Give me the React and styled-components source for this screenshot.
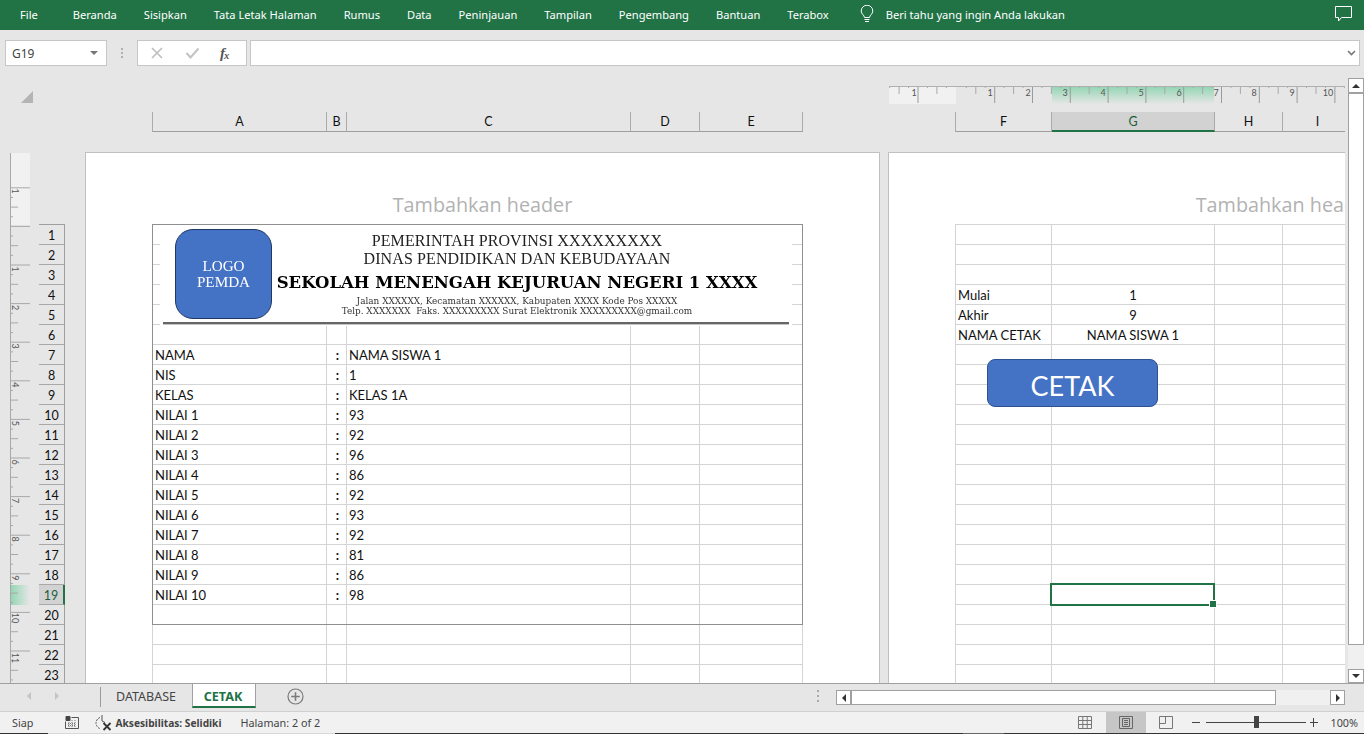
import React from "react";
import styled, { createGlobalStyle } from "styled-components";

const UI = `"Noto Sans", "Open Sans", sans-serif`;
const CELL = `Lato, "Open Sans", sans-serif`;
const GREEN = "#217346";

const Global = createGlobalStyle`
  html, body { margin: 0; padding: 0; background: #e6e6e6; }
  * { box-sizing: border-box; }
`;

const Shell = styled.div`
  width: 1364px; height: 734px; overflow: hidden;
  display: flex; flex-direction: column;
  background: #e6e6e6; font-family: ${UI};
`;

/* ---------- ribbon ---------- */
const Ribbon = styled.div`
  height: 30px; flex: none; background: ${GREEN}; color: #fff;
  display: flex; align-items: center; padding: 0 0 2px 20px;
  font-size: 11.12px;
`;
const RibbonTab = styled.span`
  margin-right: ${(p) => p.$gap}px; white-space: nowrap;
`;
const TellMe = styled.div`
  display: flex; align-items: center; gap: 12px; margin-left: 4px; white-space: nowrap;
`;
const CommentButton = styled.div`
  margin-left: auto; margin-right: 12px; display: flex;
`;

/* ---------- formula bar ---------- */
const FormulaBar = styled.div`
  height: 40px; flex: none; display: flex; padding: 10px 4px 4px 5px;
`;
const NameBox = styled.div`
  width: 102px; background: #fff; border: 1px solid #c6c6c6;
  display: flex; align-items: center; justify-content: space-between;
  padding: 0 8px 0 6px; font-size: 12px; color: #444;
`;
const Caret = styled.span`
  width: 0; height: 0; border-left: 4px solid transparent; border-right: 4px solid transparent;
  border-top: 4px solid #777;
`;
const Grip = styled.div`
  width: 30px; display: flex; flex-direction: column; align-items: center; justify-content: center; gap: 2px;
  i { width: 2px; height: 2px; background: ${(p) => p.$tone || "#b0b0b0"}; display: block; }
`;
const FxBox = styled.div`
  width: 110px; background: #fff; border: 1px solid #c6c6c6;
  display: flex; align-items: center; padding-left: 12px; gap: 21px;
`;
const FxLabel = styled.span`
  font-family: "Liberation Serif", serif; font-style: italic; font-weight: 700;
  font-size: 15px; color: #555; margin-left: -1px;
  sub { font-size: 10.5px; vertical-align: -1px; margin-left: -1px; }
`;
const FormulaInput = styled.div`
  flex: 1; margin-left: 3px; background: #fff; border: 1px solid #c6c6c6;
  display: flex; align-items: center; justify-content: flex-end; padding-right: 3px;
`;

/* ---------- workspace ---------- */
const Workspace = styled.div`
  flex: 1; min-height: 0; display: flex;
`;
const SheetArea = styled.div`
  width: 1345px; flex: none; overflow: hidden; display: flex; flex-direction: column;
`;
const RulerBand = styled.div`
  height: 18px; margin-top: 16px; flex: none; display: flex;
`;
const CornerMark = styled.div`
  width: 12px; height: 12px; margin: 5px 0 0 21px; background: #b4b4b4;
  clip-path: polygon(100% 0, 100% 100%, 0 100%);
`;
const TopRuler = styled.svg`
  margin-left: auto; display: block; flex: none;
`;
const ColumnBand = styled.div`
  height: 20px; margin-top: 8px; flex: none; display: flex; padding-left: 152px;
`;
const ColumnGroup = styled.div`
  display: flex; flex: none; margin-right: ${(p) => p.$after || 0}px;
`;
const ColumnHead = styled.div`
  flex: none; width: ${(p) => p.$w}px; height: 20px;
  font-family: ${CELL}; font-size: 12.5px; line-height: 19px; text-align: center;
  color: ${(p) => (p.$active ? "#1d5f3b" : "#111")};
  background: ${(p) => (p.$active ? "#d2d2d2" : "transparent")};
  border-bottom: ${(p) => (p.$active ? `2px solid ${GREEN}` : "1px solid #9e9e9e")};
  border-right: 1px solid #ababab;
  border-left: ${(p) => (p.$first ? "1px solid #ababab" : "0")};
`;
const Body = styled.div`
  flex: 1; min-height: 0; margin-top: 20px; display: flex; overflow: hidden;
`;
const SideRuler = styled.svg`
  display: block; flex: none; margin: 1px 0 0 10px;
`;
const RowHeads = styled.div`
  flex: none; width: 26px; margin: 72px 0 0 9px; border-top: 1px solid #9e9e9e; align-self: flex-start;
`;
const RowHead = styled.div`
  height: 20px; text-align: center; font-family: ${CELL}; font-size: 12.5px; line-height: 21px;
  color: ${(p) => (p.$active ? "#1d5f3b" : "#111")};
  background: ${(p) => (p.$active ? "#d2d2d2" : "transparent")};
  border-bottom: 1px solid #a8a8a8;
  border-right: ${(p) => (p.$active ? `2px solid ${GREEN}` : "1px solid #9e9e9e")};
`;
const Page = styled.section`
  flex: none; width: 795px; height: 600px; margin-left: ${(p) => p.$left}px;
  background: #fff; border: 1px solid #c0c0c0;
  padding-left: 66px;
`;
const HeaderHint = styled.div`
  height: 71px; margin-left: -66px; padding-top: 38px; text-align: center;
  font-size: 19.8px; line-height: 28px; color: #b2b2b2; font-family: "Open Sans", sans-serif;
  white-space: nowrap;
`;
const Sheet = styled.div`
  position: relative; display: grid; width: max-content;
  grid-template-columns: ${(p) => p.$cols};
  grid-auto-rows: 20px;
  border-top: 1px solid #d4d4d4; border-left: 1px solid #d4d4d4;
`;
const Cell = styled.div`
  position: relative; height: 20px; padding: 0 2px;
  border-right: 1px solid #d4d4d4; border-bottom: 1px solid #d4d4d4;
  font-family: ${CELL}; font-size: 13px; line-height: 20px; color: #111; white-space: nowrap;
  text-align: ${(p) => p.$align || "left"};
  font-weight: ${(p) => (p.$bold ? 700 : 400)};
  padding-left: ${(p) => (p.$bold ? 4 : 2)}px;
`;
const PrintArea = styled.div`
  position: absolute; left: -1px; top: -1px; width: 651px; height: 401px;
  border: 1px solid #8f8f8f; pointer-events: none;
`;
const Letterhead = styled.div`
  position: absolute; left: 7px; top: 0; width: 632px; height: 101px;
  background: #fff; display: flex; flex-direction: column; filter: blur(0.25px);
`;
const LetterTop = styled.div`
  display: flex; flex: none; height: 97px;
`;
const Logo = styled.div`
  flex: none; width: 97px; height: 90px; margin: 4px 0 0 15px;
  background: #4472c4; border: 1px solid #1f3864; border-radius: 18px;
  color: #fff; font-family: "Liberation Serif", serif; font-size: 15.2px; line-height: 16px;
  display: flex; flex-direction: column; align-items: center; justify-content: center;
`;
const LetterText = styled.div`
  flex: none; width: 490px; text-align: center; color: #222; white-space: nowrap;
  font-family: "Liberation Serif", serif; padding-top: 7px;
`;
const LetterLine = styled.div`
  font-size: 16px; line-height: 18px; letter-spacing: 0.1px;
`;
const SchoolName = styled.div`
  font-family: "DejaVu Serif", serif; font-weight: 700; color: #000;
  font-size: 16.5px; line-height: 20px; margin-top: 5px;
`;
const Address = styled.div`
  font-family: "DejaVu Serif", serif; font-size: 8.9px; line-height: 10px; color: #333;
`;
const AddressBlock = styled.div`
  margin-top: 3px;
`;
const LetterRule = styled.div`
  height: 2px; margin: 0 3px; background: #666;
  box-shadow: 0 1px 0 #c4c4c4;
`;
const SelectionBox = styled.div`
  position: absolute; left: -2px; top: -2px; width: 165px; height: 23px;
  border: 2px solid ${GREEN}; z-index: 2;
`;
const FillHandle = styled.div`
  position: absolute; right: -3px; bottom: -3px; width: 6px; height: 6px;
  background: ${GREEN}; outline: 1px solid #fff;
`;
const PrintButton = styled.div`
  position: absolute; left: 31px; top: 134px; width: 171px; height: 48px;
  background: #4472c4; border: 1px solid #2f528f; border-radius: 8px; z-index: 1;
  color: #fff; font-family: ${CELL}; font-size: 27px; line-height: 52px; text-align: center;
`;

/* ---------- vertical scrollbar ---------- */
const VScroll = styled.div`
  width: 16px; margin: 8px 0 0 3px; flex: none; display: flex; flex-direction: column; background: #f0f0f0;
`;
const ScrollButton = styled.div`
  flex: none; width: ${(p) => p.$w || 16}px; height: ${(p) => p.$h || 15}px;
  background: #fff; border: 1px solid #a0a0a0;
  display: flex; align-items: center; justify-content: center;
`;
const Thumb = styled.div`
  flex: ${(p) => p.$flex}; background: #fff; border: 1px solid #a0a0a0;
`;
const ScrollGap = styled.div`
  flex: none; height: 24px;
`;
const Arrow = styled.span`
  width: 0; height: 0; display: block;
  ${(p) => p.$dir === "up" && "border-left: 4px solid transparent; border-right: 4px solid transparent; border-bottom: 4px solid #333;"}
  ${(p) => p.$dir === "down" && "border-left: 4px solid transparent; border-right: 4px solid transparent; border-top: 4px solid #333;"}
  ${(p) => p.$dir === "left" && `border-top: 4px solid transparent; border-bottom: 4px solid transparent; border-right: 4px solid ${p.$c || "#333"};`}
  ${(p) => p.$dir === "right" && `border-top: 4px solid transparent; border-bottom: 4px solid transparent; border-left: 4px solid ${p.$c || "#333"};`}
`;

/* ---------- tab bar ---------- */
const TabBar = styled.div`
  height: 28px; flex: none; border-top: 1px solid #a0a0a0; display: flex; align-items: flex-start;
`;
const TabNav = styled.div`
  width: 100px; height: 24px; flex: none; display: flex; align-items: center; padding-left: 27px; gap: 24px;
`;
const TabDivider = styled.div`
  width: 1px; height: 20px; margin-top: 3px; background: #9a9a9a; flex: none;
`;
const SheetTab = styled.div`
  height: 24px; flex: none; width: ${(p) => p.$w}px; text-align: center; line-height: 25px;
  font-size: ${(p) => (p.$active ? 12.6 : 12.5)}px;
  color: ${(p) => (p.$active ? GREEN : "#444")};
  font-weight: ${(p) => (p.$active ? 700 : 400)};
  background: ${(p) => (p.$active ? "#fff" : "transparent")};
  border-left: ${(p) => (p.$active ? "1px solid #a0a0a0" : "0")};
  border-right: ${(p) => (p.$active ? "1px solid #a0a0a0" : "0")};
  border-bottom: ${(p) => (p.$active ? `2px solid ${GREEN}` : "0")};
  padding-right: ${(p) => (p.$active ? 2 : 1)}px;
`;
const AddTab = styled.div`
  margin: 4px 0 0 31px; display: flex; flex: none;
`;
const TabGrip = styled(Grip)`
  width: 10px; height: 16px; margin: 4px 13px 0 auto; gap: 3px;
`;
const HScroll = styled.div`
  width: 509px; height: 15px; margin: 6px 19px 0 0; flex: none; display: flex; background: #f0f0f0;
`;
const HThumb = styled.div`
  width: 425px; flex: none; background: #fff; border: 1px solid #a0a0a0;
`;
const HGap = styled.div`
  flex: 1;
`;

/* ---------- status bar ---------- */
const StatusBar = styled.div`
  height: 22px; flex: none; background: #f1f1f1; border-top: 1px solid #d0d0d0;
  display: flex; align-items: stretch; color: #444;
`;
const StatusItem = styled.div`
  flex: none; display: flex; align-items: center; margin-left: ${(p) => p.$left}px;
  font-weight: ${(p) => (p.$bold ? 700 : 400)}; white-space: nowrap; color: ${(p) => p.$c || "#444"};
  font-size: ${(p) => p.$size || 10.8}px;
`;
const ViewButton = styled.div`
  flex: none; width: ${(p) => p.$w}px; display: flex; align-items: center; justify-content: center;
  background: ${(p) => (p.$active ? "#c6c6c6" : "transparent")};
`;
const ZoomTrack = styled.div`
  position: relative; width: 100px; margin: 10px 4px 0 6px; height: 1px; background: #444; flex: none;
`;
const ZoomThumb = styled.div`
  position: absolute; left: 48px; top: -6px; width: 5px; height: 12px; background: #444;
`;
const ZoomSign = styled.div`
  flex: none; width: 8px; height: 1px; background: #444; position: relative;
  &::after {
    content: ${(p) => (p.$plus ? '""' : "none")};
    position: absolute; left: 3.5px; top: -4px; width: 1px; height: 9px; background: #444;
  }
`;
const Sliver = styled.div`
  height: 1px; flex: none;
  background: linear-gradient(to right, #333 0 48px, #d8d8d8 48px 335px, #333 335px 963px, #666 963px 1004px, #333 1004px);
`;
const StatusRight = styled.div`
  margin-left: auto; display: flex; align-items: stretch;
`;

/* ---------- drawings ---------- */
const ticksTop = () => {
  const out = [];
  const run = (origin, from, to) => {
    for (let i = -40; i < 60; i++) {
      const x = origin + i * 9.45;
      if (x < from || x > to) continue;
      const k = ((i % 4) + 4) % 4;
      const h = k === 0 ? 17 : k === 2 ? 8 : 2;
      out.push(<line key={`t${origin}${i}`} x1={x} x2={x} y1={1} y2={h} stroke={k === 0 ? "#9a9a9a" : "#a8a8a8"} strokeWidth="1" />);
    }
  };
  run(105.7, 70, 456);
  run(29, 0, 66);
  return out;
};
const rulerNums = [[25, 1], [101, 1], [139, 2], [176, 3], [214, 4], [252, 5], [290, 6], [327, 7], [365, 8], [403, 9], [439, 10]];

const TopRulerArt = () => (
  <TopRuler width="456" height="18" viewBox="0 0 456 18">
    <defs>
      <linearGradient id="rg" x1="0" x2="0" y1="0" y2="1">
        <stop offset="0" stopColor="#94d6b4" />
        <stop offset="1" stopColor="#e6e6e6" />
      </linearGradient>
    </defs>
    <rect x="0" y="1" width="67" height="17" fill="#f1f1f1" />
    <rect x="163" y="1" width="162" height="17" fill="url(#rg)" />
    <line x1="0" x2="456" y1="0.5" y2="0.5" stroke="#b0b0b0" />
    {ticksTop()}
    {rulerNums.map(([x, n]) => (
      <text key={`${x}`} x={x} y="10" fontSize="9" fontFamily="Lato, sans-serif" fill="#555" textAnchor="middle">{n}</text>
    ))}
  </TopRuler>
);

const SideRulerArt = () => {
  const items = [];
  for (let i = -8; i < 50; i++) {
    const y = 112 + i * 9.65;
    if (y < 0 || y > 530) continue;
    const k = ((i % 4) + 4) % 4;
    const w = k === 0 ? 19 : k === 2 ? 7 : 2;
    items.push(<line key={i} x1="1" x2={1 + w} y1={y} y2={y} stroke="#a8a8a8" />);
  }
  const nums = [[38, 1], [116, 1], [154.6, 2], [193, 3], [231.8, 4], [270.4, 5], [309, 6], [347.6, 7], [386, 8], [424.8, 9], [465, 10], [505, 11]];
  return (
    <SideRuler width="20" height="530" viewBox="0 0 20 530">
      <defs>
        <linearGradient id="rs" x1="0" x2="1" y1="0" y2="0">
          <stop offset="0" stopColor="#94d6b4" />
          <stop offset="1" stopColor="#e6e6e6" />
        </linearGradient>
      </defs>
      <rect x="1" y="0" width="19" height="72" fill="#f1f1f1" />
      <rect x="1" y="432" width="19" height="20" fill="url(#rs)" />
      <line x1="0.5" x2="0.5" y1="0" y2="530" stroke="#a8a8a8" />
      {items}
      {nums.map(([y, n]) => (
        <text key={y} x="0" y="0" transform={`translate(2 ${y}) rotate(90)`} fontSize="9" fontFamily="Lato, sans-serif" fill="#555" textAnchor="middle">{n}</text>
      ))}
    </SideRuler>
  );
};

const Bulb = () => (
  <svg width="14" height="18" viewBox="0 0 14 18" fill="none" stroke="#fff" strokeWidth="1">
    <path d="M4.5 12.5 C4.2 10 1.2 9 1.2 6 A5.8 5.8 0 0 1 12.8 6 C12.8 9 9.8 10 9.5 12.5 Z" />
    <path d="M4.5 14.5 H9.5 M5 16.5 H9" />
  </svg>
);
const Comment = () => (
  <svg width="17" height="16" viewBox="0 0 17 16" fill="none" stroke="#fff" strokeWidth="1">
    <path d="M0.5 0.5 H16.5 V11.5 H6.5 L3.5 15 V11.5 H0.5 Z" />
  </svg>
);
const XMark = () => (
  <svg width="14" height="14" viewBox="0 0 14 14" fill="none" stroke="#bdbdbd" strokeWidth="1.6">
    <path d="M2 2 L12 12 M12 2 L2 12" />
  </svg>
);
const CheckMark = () => (
  <svg width="15" height="14" viewBox="0 0 15 14" fill="none" stroke="#c2c2c2" strokeWidth="2">
    <path d="M1.5 7 L5.5 11.5 L13.5 2.5" />
  </svg>
);
const Chevron = () => (
  <svg width="9" height="6" viewBox="0 0 9 6" fill="none" stroke="#777" strokeWidth="1.6">
    <path d="M1 1 L4.5 4.5 L8 1" />
  </svg>
);
const PlusCircle = () => (
  <svg width="17" height="17" viewBox="0 0 17 17" fill="none" stroke="#7a7a7a">
    <circle cx="8.5" cy="8.5" r="7.5" strokeWidth="1.2" />
    <path d="M8.5 4.2 V12.8 M4.2 8.5 H12.8" strokeWidth="1.6" />
  </svg>
);
const MacroIcon = () => (
  <svg width="14" height="13" viewBox="0 0 14 13">
    <rect x="0.5" y="0" width="5" height="5" rx="1" fill="#444" />
    <path d="M6.5 1.5 H13.5 V12.5 H0.5 V5.5" fill="none" stroke="#555" />
    <path d="M3 7.5 H11 M3 9.5 H11 M4 6 V12 M7 4 V12 M10 4 V12" stroke="#777" strokeDasharray="1 1" fill="none" />
  </svg>
);
const AccessIcon = () => (
  <svg width="17" height="16" viewBox="0 0 17 16" fill="none">
    <path d="M7 0 V6 L10 7.5" stroke="#555" />
    <path d="M5 2.5 A6 6 0 0 0 1 8 A6 6 0 0 0 5 13.6" stroke="#555" strokeDasharray="2 1" />
    <path d="M8.5 8 L15.5 15 M15.5 8 L8.5 15" stroke="#333" strokeWidth="1.8" />
  </svg>
);
const GridView = () => (
  <svg width="14" height="13" viewBox="0 0 14 13" fill="none" stroke="#777">
    <path d="M0.5 0.5 H13.5 V12.5 H0.5 Z M0.5 4.5 H13.5 M0.5 8.5 H13.5 M4.8 0.5 V12.5 M9.2 0.5 V12.5" />
  </svg>
);
const PageView = () => (
  <svg width="14" height="13" viewBox="0 0 14 13" fill="none" stroke="#666">
    <path d="M0.5 0.5 H13.5 V12.5 H0.5 Z M3.5 2.5 H10.5 V10.5 H3.5 Z M5 4.5 H9 M5 6.5 H9 M5 8.5 H9" />
  </svg>
);
const BreakView = () => (
  <svg width="14" height="13" viewBox="0 0 14 13" fill="none" stroke="#777">
    <path d="M0.5 0.5 H13.5 V12.5 H0.5 Z M0.5 7.5 H6.5 V0.5" />
  </svg>
);

/* ---------- data ---------- */
const LEFT_COLS = [["A", 174], ["B", 20], ["C", 284], ["D", 69], ["E", 103]];
const RIGHT_COLS = [["F", 96], ["G", 163], ["H", 68], ["I", 70]];
const LEFT_ROWS = {
  7: ["NAMA", "NAMA SISWA 1"], 8: ["NIS", "1"], 9: ["KELAS", "KELAS 1A"],
  10: ["NILAI 1", "93"], 11: ["NILAI 2", "92"], 12: ["NILAI 3", "96"], 13: ["NILAI 4", "86"],
  14: ["NILAI 5", "92"], 15: ["NILAI 6", "93"], 16: ["NILAI 7", "92"], 17: ["NILAI 8", "81"],
  18: ["NILAI 9", "86"], 19: ["NILAI 10", "98"],
};
const RIGHT_ROWS = { 4: ["Mulai", "1"], 5: ["Akhir", "9"], 6: ["NAMA CETAK", "NAMA SISWA 1"] };
const ROW_NUMS = Array.from({ length: 23 }, (_, i) => i + 1);
const RIBBON = [["File", 35], ["Beranda", 27], ["Sisipkan", 27], ["Tata Letak Halaman", 27], ["Rumus", 27], ["Data", 27], ["Peninjauan", 27], ["Tampilan", 27], ["Pengembang", 27], ["Bantuan", 27], ["Terabox", 27]];

const cols = (list) => list.map(([, w]) => `${w}px`).join(" ");

export default function App() {
  return (
    <Shell>
      <Global />
      <Ribbon>
        {RIBBON.map(([t, g]) => <RibbonTab key={t} $gap={g}>{t}</RibbonTab>)}
        <TellMe><Bulb /><span>Beri tahu yang ingin Anda lakukan</span></TellMe>
        <CommentButton><Comment /></CommentButton>
      </Ribbon>

      <FormulaBar>
        <NameBox>G19<Caret /></NameBox>
        <Grip><i /><i /><i /></Grip>
        <FxBox><XMark /><CheckMark /><FxLabel>f<sub>x</sub></FxLabel></FxBox>
        <FormulaInput><Chevron /></FormulaInput>
      </FormulaBar>

      <Workspace>
        <SheetArea>
          <RulerBand><CornerMark /><TopRulerArt /></RulerBand>
          <ColumnBand>
            <ColumnGroup $after={152}>
              {LEFT_COLS.map(([n, w], i) => <ColumnHead key={n} $w={w + (i === 0 ? 1 : 0)} $first={i === 0}>{n}</ColumnHead>)}
            </ColumnGroup>
            <ColumnGroup>
              {RIGHT_COLS.map(([n, w], i) => <ColumnHead key={n} $w={w + (i === 0 ? 1 : 0)} $first={i === 0} $active={n === "G"}>{n}</ColumnHead>)}
            </ColumnGroup>
          </ColumnBand>
          <Body>
            <SideRulerArt />
            <RowHeads>
              {ROW_NUMS.map((n) => <RowHead key={n} $active={n === 19}>{n}</RowHead>)}
            </RowHeads>

            <Page $left={20}>
              <HeaderHint>Tambahkan header</HeaderHint>
              <Sheet $cols={cols(LEFT_COLS)}>
                {ROW_NUMS.map((r) => {
                  const d = LEFT_ROWS[r];
                  return (
                    <React.Fragment key={r}>
                      <Cell>{d && d[0]}</Cell>
                      <Cell $align="center" $bold>{d && ":"}</Cell>
                      <Cell>{d && d[1]}</Cell>
                      <Cell />
                      <Cell />
                    </React.Fragment>
                  );
                })}
                <PrintArea />
                <Letterhead>
                  <LetterTop>
                    <Logo><span>LOGO</span><span>PEMDA</span></Logo>
                    <LetterText>
                      <LetterLine>PEMERINTAH PROVINSI XXXXXXXXX</LetterLine>
                      <LetterLine>DINAS PENDIDIKAN DAN KEBUDAYAAN</LetterLine>
                      <SchoolName>SEKOLAH MENENGAH KEJURUAN NEGERI 1 XXXX</SchoolName>
                      <AddressBlock>
                        <Address>Jalan XXXXXX, Kecamatan XXXXXX, Kabupaten XXXX Kode Pos XXXXX</Address>
                        <Address>Telp. XXXXXXX&nbsp; Faks. XXXXXXXXX Surat Elektronik XXXXXXXXX@gmail.com</Address>
                      </AddressBlock>
                    </LetterText>
                  </LetterTop>
                  <LetterRule />
                </Letterhead>
              </Sheet>
            </Page>

            <Page $left={8}>
              <HeaderHint>Tambahkan header</HeaderHint>
              <Sheet $cols={cols(RIGHT_COLS)}>
                {ROW_NUMS.map((r) => {
                  const d = RIGHT_ROWS[r];
                  return (
                    <React.Fragment key={r}>
                      <Cell>{d && d[0]}</Cell>
                      <Cell $align="center">
                        {d && d[1]}
                        {r === 19 && <SelectionBox><FillHandle /></SelectionBox>}
                      </Cell>
                      <Cell />
                      <Cell />
                    </React.Fragment>
                  );
                })}
                <PrintButton>CETAK</PrintButton>
              </Sheet>
            </Page>
          </Body>
        </SheetArea>
        <VScroll>
          <ScrollButton $h={15}><Arrow $dir="up" /></ScrollButton>
          <Thumb $flex={1} />
          <ScrollGap />
          <ScrollButton $h={14}><Arrow $dir="down" /></ScrollButton>
        </VScroll>
      </Workspace>

      <TabBar>
        <TabNav><Arrow $dir="left" $c="#c4c4c4" /><Arrow $dir="right" $c="#c4c4c4" /></TabNav>
        <TabDivider />
        <SheetTab $w={91}>DATABASE</SheetTab>
        <SheetTab $w={64} $active>CETAK</SheetTab>
        <AddTab><PlusCircle /></AddTab>
        <TabGrip $tone="#a8a8a8"><i /><i /><i /></TabGrip>
        <HScroll>
          <ScrollButton $w={15} $h={15}><Arrow $dir="left" /></ScrollButton>
          <HThumb />
          <HGap />
          <ScrollButton $w={15} $h={15}><Arrow $dir="right" /></ScrollButton>
        </HScroll>
      </TabBar>

      <StatusBar>
        <StatusItem $left={12}>Siap</StatusItem>
        <StatusItem $left={32}><MacroIcon /></StatusItem>
        <StatusItem $left={16}><AccessIcon /></StatusItem>
        <StatusItem $left={3} $bold $size={10.2}>Aksesibilitas: Selidiki</StatusItem>
        <StatusItem $left={19}>Halaman: 2 of 2</StatusItem>
        <StatusRight>
          <ViewButton $w={41}><GridView /></ViewButton>
          <ViewButton $w={40} $active><PageView /></ViewButton>
          <ViewButton $w={40}><BreakView /></ViewButton>
          <StatusItem $left={6}><ZoomSign /></StatusItem>
          <ZoomTrack><ZoomThumb /></ZoomTrack>
          <StatusItem $left={0}><ZoomSign $plus /></StatusItem>
          <StatusItem $left={13}>100%</StatusItem>
          <StatusItem $left={6} />
        </StatusRight>
      </StatusBar>
      <Sliver />
    </Shell>
  );
}
